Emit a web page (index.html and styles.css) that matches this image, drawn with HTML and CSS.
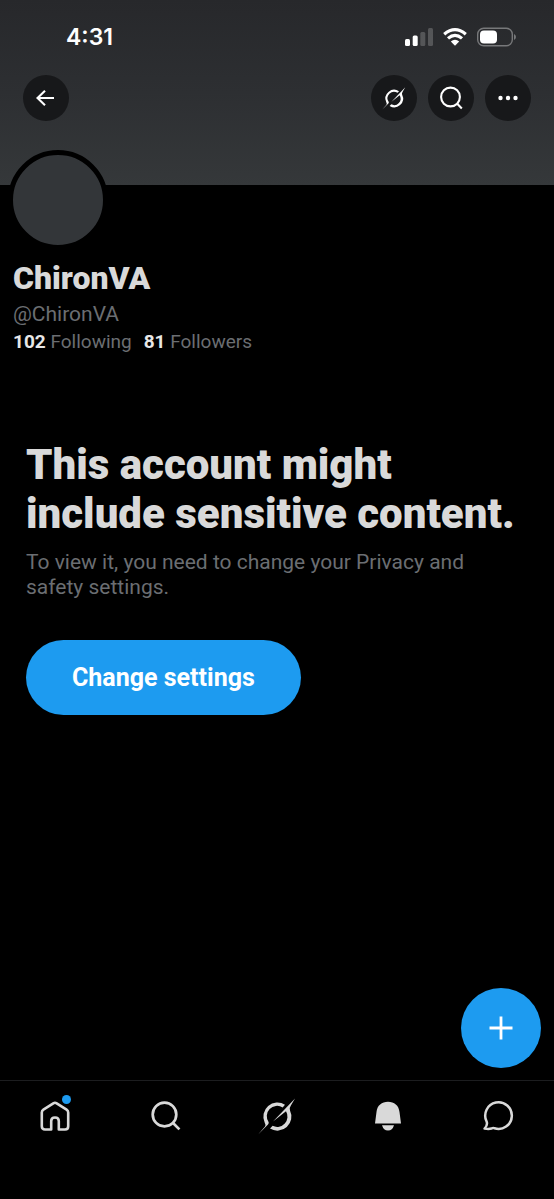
FILE: index.html
```html
<!DOCTYPE html>
<html lang="en">
<head>
<meta charset="utf-8">
<meta name="viewport" content="width=device-width, initial-scale=1">
<title>ChironVA</title>
<link rel="stylesheet" href="styles.css">
</head>
<body>
<svg class="defs" aria-hidden="true">
  <symbol id="grok" viewBox="3 2 114 110">
    <path d="M4 110L24 87Q27 82 23 75A42 42 0 0 1 84 22L77 30A31 31 0 0 0 35 74Q36 77 33 81Z"/>
    <path d="M48 72L114 3L102 23Q96 31 99 39A42 42 0 0 1 39 93L47 85A31 31 0 0 0 87 41Z"/>
  </symbol>
</svg>
<div class="screen">
  <header class="banner">
    <div class="status">
      <span class="time">4:31</span>
      <div class="indicators">
        <svg width="28" height="18" viewBox="0 0 28 18" fill="#fff" aria-label="Signal"><rect y="11" width="5" height="7" rx="1.5"/><rect x="7.7" y="7.5" width="5" height="10.5" rx="1.5"/><g opacity=".2"><rect x="15.3" y="4" width="5" height="14" rx="1.5"/><rect x="23" width="5" height="18" rx="1.5"/></g></svg>
        <svg width="24" height="18" viewBox="0 0 24 18" fill="none" stroke="#fff" stroke-width="3.2" aria-label="Wi-Fi"><path d="M1.2 6.2Q12-2.8 22.8 6.2M5 10.4Q12 4.4 19 10.4"/><path d="M7.8 13.4Q12 10 16.2 13.4L12 17.8Z" fill="#fff" stroke="none"/></svg>
        <svg width="39" height="20" viewBox="0 0 39 20" fill="none" aria-label="Battery"><rect x=".7" y="1.2" width="34.6" height="17.6" rx="6" stroke="#77787a" stroke-width="1.4"/><rect x="3" y="3.5" width="17" height="13" rx="4" fill="#fff"/><path d="M37 7v6q2-1 2-3t-2-3Z" fill="#77787a"/></svg>
      </div>
    </div>
    <div class="toolbar">
      <button class="round back" aria-label="Back"><svg width="20" height="18" viewBox="0 0 20 18" fill="none" stroke="#fff" stroke-width="2.1"><path d="M18 9H1.5M9 1.7L1.5 9L9 16.3"/></svg></button>
      <button class="round" aria-label="Grok"><svg width="24" height="23" fill="#fff"><use href="#grok"/></svg></button>
      <button class="round" aria-label="Search"><svg width="24" height="24" viewBox="0 0 24 24" fill="none" stroke="#fff" stroke-width="2.1"><circle cx="11.5" cy="11" r="9.4"/><path d="M18 17.5L22.8 22.4"/></svg></button>
      <button class="round" aria-label="More"><svg width="20" height="6" viewBox="0 0 20 6" fill="#fff"><circle cx="2.5" cy="3" r="2.2"/><circle cx="10" cy="3" r="2.2"/><circle cx="17.5" cy="3" r="2.2"/></svg></button>
    </div>
  </header>
  <main class="content">
    <section class="profile">
      <div class="avatar"></div>
      <h1 class="name">ChironVA</h1>
      <p class="handle">@ChironVA</p>
      <p class="stats"><a href="#following"><b>102</b> Following</a><a href="#followers"><b>81</b> Followers</a></p>
    </section>
    <section class="notice">
      <h2 class="title">This account might include sensitive content.</h2>
      <p class="text">To view it, you need to change your Privacy and safety settings.</p>
      <button class="change">Change settings</button>
    </section>
  </main>
  <button class="compose" aria-label="New post"><svg width="24" height="24" viewBox="0 0 24 24" stroke="#fff" stroke-width="2.8"><path d="M12 .5V23.5M.5 12H23.5"/></svg></button>
  <nav class="tabs">
    <a href="#home" aria-label="Home"><span class="home"><svg width="30" height="32" viewBox="0 0 30 32" fill="none" stroke="#d9d9d9" stroke-width="2.6" stroke-linejoin="round"><path d="M11.2 29.5H5Q1.8 29.5 1.8 26.3V12.5Q1.8 10.6 3.4 9.6L13.3 3.3Q15 2.2 16.7 3.3L26.6 9.6Q28.2 10.6 28.2 12.5V26.3Q28.2 29.5 25 29.5H18.8V21Q18.8 17.5 15 17.5T11.2 21Z"/></svg><i class="dot"></i></span></a>
    <a href="#search" aria-label="Search"><svg width="30" height="30" viewBox="0 0 30 30" fill="none" stroke="#d9d9d9" stroke-width="2.7"><circle cx="13.5" cy="13.5" r="11.8"/><path d="M21.8 21.8L28.4 28.4"/></svg></a>
    <a href="#grok-chat" aria-label="Grok"><svg width="38" height="37" fill="#d9d9d9"><use href="#grok"/></svg></a>
    <a href="#notifications" aria-label="Notifications"><svg width="28" height="30" viewBox="0 0 28 30" fill="#d9d9d9"><path d="M1 22.5L2.5 11C3.2 4.5 7.8 .8 14 .8S24.8 4.5 25.5 11L27 22.5ZM8 24.3H20Q18.5 29.5 14 29.5T8 24.3Z"/></svg></a>
    <a href="#messages" aria-label="Messages"><svg width="32" height="30" viewBox="0 0 32 30" fill="none" stroke="#d9d9d9" stroke-width="2.5" stroke-linejoin="round"><path d="M1.6 27.5Q5 24 3.6 20.5A13.3 13.3 0 1 1 11.5 27.3Q10.2 26.5 8.5 27.5Q5.5 28.3 1.6 27.5Z"/></svg></a>
  </nav>
</div>
</body>
</html>
```
FILE: styles.css
```css
* { box-sizing: border-box; }
body { margin: 0; background: #000; color: #d9d9d9; font-family: Roboto, "Liberation Sans", sans-serif; }
button { border: 0; padding: 0; color: #fff; font-family: inherit; cursor: pointer; }
a { color: inherit; text-decoration: none; }
h1, h2, p { margin: 0; }
svg { display: block; }
.defs { position: absolute; width: 0; height: 0; }
.screen { display: flex; flex-direction: column; min-height: 100vh; }

.banner { padding-bottom: 64px; background: linear-gradient(#27282b, #2d2f32 50%, #35383a); }
.status { display: flex; justify-content: space-between; align-items: center; height: 75px; padding: 0 38px 2px 66px; }
.time { color: #fff; font: 600 23px/28px Inter, sans-serif; }
.indicators { display: flex; align-items: center; gap: 10px; }
.toolbar { display: flex; gap: 11px; padding: 0 23px; }
.round { display: grid; place-items: center; width: 46px; height: 46px; border-radius: 50%; background: #17181a; }
.back { margin-right: auto; }

.content { flex: 1; }
.profile { padding: 0 13px; }
.avatar { position: relative; width: 100px; height: 100px; margin: -35px 0 0 -5px; border: 5px solid #000; border-radius: 50%; background: #333639; }
.name { margin-top: 9px; font-size: 32px; line-height: 38px; font-weight: 900; }
.handle { margin-top: 4px; font-size: 21px; line-height: 26px; color: #6b6e72; }
.stats { display: flex; gap: 12px; margin-top: 3px; font-size: 19px; line-height: 24px; color: #6b6e72; }
.stats b { color: #e7e7e7; }

.notice { padding: 86px 26px 0; }
.title { font-size: 42px; line-height: 49px; font-weight: 900; }
.text { margin-top: 12px; padding-right: 26px; font-size: 21px; line-height: 25px; color: #6b6e72; }
.change { margin-top: 40px; padding: 0 46px; height: 75px; border-radius: 38px; background: #1d9bf0; font-size: 25px; font-weight: 700; }

.compose { position: fixed; right: 13px; bottom: 131px; display: grid; place-items: center; width: 80px; height: 80px; border-radius: 50%; background: #1d9bf0; }
.tabs { display: grid; grid-template-columns: repeat(5, 1fr); height: 119px; padding-bottom: 48px; border-top: 1px solid #1c1d1f; }
.tabs a { display: grid; place-items: center; }
.home { position: relative; }
.dot { position: absolute; top: -5px; right: -1px; width: 9px; height: 9px; border-radius: 50%; background: #1d9bf0; }
```
